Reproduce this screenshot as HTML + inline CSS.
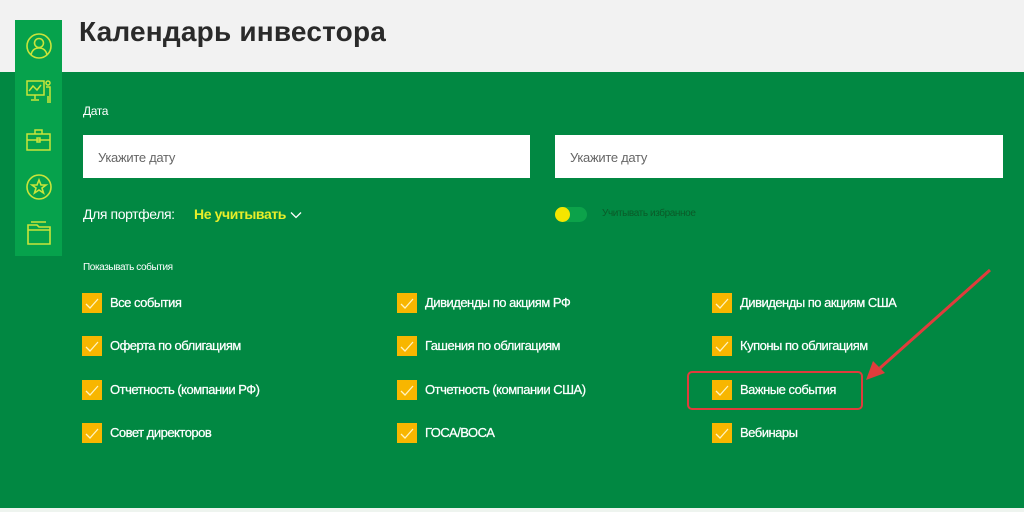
<!DOCTYPE html>
<html><head><meta charset="utf-8"><style>
*{margin:0;padding:0;box-sizing:border-box}
body{width:1024px;height:512px;overflow:hidden;background:#eef4ef;font-family:"Liberation Sans","DejaVu Sans",sans-serif;position:relative}
.top{position:absolute;left:0;top:0;width:1024px;height:72px;background:#f2f2f2}
.green{position:absolute;left:0;top:72px;width:1024px;height:436px;background:#018842}
.side{position:absolute;left:15px;top:20px;width:47px;height:236px;background:#06a24c}
h1{position:absolute;left:79px;top:16px;font-size:28px;font-weight:bold;color:#2a2a2a;letter-spacing:0.2px}
.t{position:absolute;color:#fff;font-size:13px;letter-spacing:-0.4px;white-space:nowrap}
.inp{position:absolute;top:135px;height:43px;background:#fff;width:447px;font-size:13px;color:#666;padding:15px 0 0 15px;letter-spacing:-0.3px}
.cb{position:absolute;width:20px;height:20px;background:#f8b600}
.cb svg{position:absolute;left:0;top:0}
.lbl{position:absolute;color:#fff;font-size:13px;letter-spacing:-0.5px;white-space:nowrap;-webkit-text-stroke:0.25px #fff}
svg.ic{position:absolute;left:25px}
</style></head><body>
<div class="top"></div>
<div class="green"></div>
<div class="side"></div>
<svg class="ic" style="top:32px" width="28" height="28" viewBox="0 0 28 28" fill="none" stroke="#c9e43a" stroke-width="1.6"><circle cx="14" cy="14" r="12"/><circle cx="14" cy="11" r="4.5"/><path d="M6 23c1-5 4-7 8-7s7 2 8 7"/></svg>
<svg class="ic" style="top:78px" width="28" height="28" viewBox="0 0 28 28" fill="none" stroke="#c9e43a" stroke-width="1.5"><rect x="2" y="3" width="17" height="14"/><path d="M4 13l4-5 4 4 4-5M10 17v4M6 22h8"/><circle cx="23" cy="5" r="2"/><path d="M21 9h4v16M23 25v-7"/></svg>
<svg class="ic" style="top:126px" width="28" height="28" viewBox="0 0 28 28" fill="none" stroke="#c9e43a" stroke-width="1.5"><rect x="2" y="8" width="23" height="16"/><path d="M10 8V4h7v4M2 14h23"/><rect x="12" y="12" width="3" height="4"/></svg>
<svg class="ic" style="top:173px" width="28" height="28" viewBox="0 0 28 28" fill="none" stroke="#c9e43a" stroke-width="1.6"><circle cx="14" cy="14" r="12"/><path d="M14 7l2 5h5l-4 3 1.5 5-4.5-3-4.5 3 1.5-5-4-3h5z"/></svg>
<svg class="ic" style="top:219px" width="28" height="28" viewBox="0 0 28 28" fill="none" stroke="#c9e43a" stroke-width="1.6"><path d="M3 6h9l2 2h11v17H3z"/><path d="M3 11h22M6 3h15"/></svg>
<h1>Календарь инвестора</h1>
<div class="t" style="left:83px;top:104px;font-size:12px">Дата</div>
<div class="inp" style="left:83px">Укажите дату</div>
<div class="inp" style="left:555px;width:448px">Укажите дату</div>
<div class="t" style="left:83px;top:206px;font-size:14px">Для портфеля:</div>
<div class="t" style="left:194px;top:206px;font-size:14px;font-weight:bold;color:#e8ee2a">Не учитывать</div>
<svg style="position:absolute;left:290px;top:211px" width="12" height="8"><path d="M1 1.5l5 5 5-5" stroke="#fff" stroke-width="1.3" fill="none"/></svg>
<div style="position:absolute;left:555px;top:207px;width:32px;height:15px;border-radius:8px;background:#0ca24a"></div>
<div style="position:absolute;left:555px;top:207px;width:15px;height:15px;border-radius:50%;background:#f4e500"></div>
<div class="t" style="left:602px;top:208px;font-size:10px;color:#0a5a28">Учитывать избранное</div>
<div class="t" style="left:83px;top:262px;font-size:10px">Показывать события</div>
<div id="cbs"></div>
<script>
var cols=[82,397,712],rows=[293,336,380,423];
var L=[["Все события","Оферта по облигациям","Отчетность (компании РФ)","Совет директоров"],["Дивиденды по акциям РФ","Гашения по облигациям","Отчетность (компании США)","ГОСА/ВОСА"],["Дивиденды по акциям США","Купоны по облигациям","Важные события","Вебинары"]];
var h="";for(var c=0;c<3;c++)for(var r=0;r<4;r++){h+='<div class="cb" style="left:'+cols[c]+'px;top:'+rows[r]+'px"><svg width="20" height="20"><path d="M4 11l4 4 8-9" stroke="#fff3c0" stroke-width="1.3" fill="none"/></svg></div><div class="lbl" style="left:'+(cols[c]+28)+'px;top:'+(rows[r]+2)+'px">'+L[c][r]+'</div>';}
document.getElementById("cbs").innerHTML=h;
</script>
<div style="position:absolute;left:687px;top:371px;width:176px;height:39px;border:2px solid #e03c3c;border-radius:5px"></div>
<svg style="position:absolute;left:0;top:0" width="1024" height="512"><line x1="990" y1="270" x2="880" y2="368" stroke="#e03c3c" stroke-width="3"/><path d="M866 380l7-19 12 12z" fill="#e03c3c"/></svg>
</body></html>
